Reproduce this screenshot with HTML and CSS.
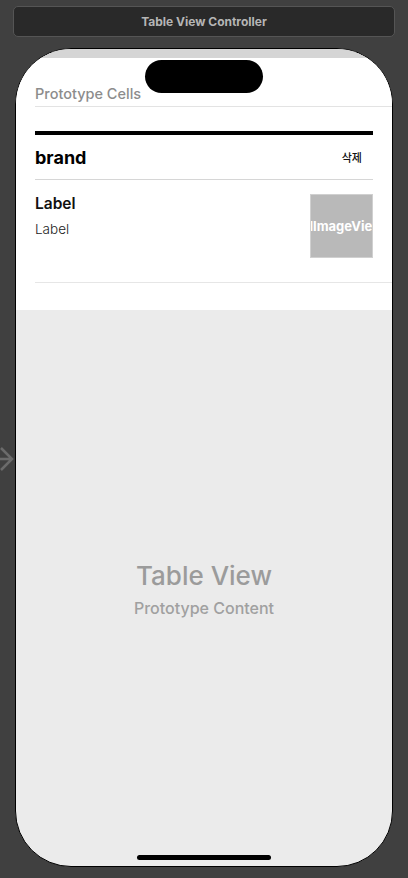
FILE: index.html
```html
<!DOCTYPE html>
<html lang="ko">
<head>
    <meta charset="UTF-8">
    <meta name="viewport" content="width=device-width, initial-scale=1.0">
    <title>Table View Controller</title>
    <link rel="stylesheet" href="styles.css">
</head>
<body>
    <div class="titlebar">Table View Controller</div>

    <svg class="entry-arrow" width="24" height="30" viewBox="0 0 24 30">
        <path d="M0 15 H21 M10 4 L21 15 L10 26" fill="none" stroke="#6b6b6b" stroke-width="2.5"/>
    </svg>

    <div class="phone">
        <div class="island"></div>
        <div class="status-strip"></div>
        <div class="cells">
            <div class="section-title">Prototype Cells</div>
            <div class="cell brand-cell">
                <div class="thick-line"></div>
                <div class="brand-row">
                    <span class="brand">brand</span>
                    <span class="delete">삭제</span>
                </div>
            </div>
            <div class="cell item-cell">
                <div class="labels">
                    <div class="label-title">Label</div>
                    <div class="label-sub">Label</div>
                </div>
                <div class="image-view"><span>UIImageView</span></div>
            </div>
        </div>
        <div class="table-body">
            <div class="tv-title">Table View</div>
            <div class="tv-sub">Prototype Content</div>
        </div>
        <div class="home-bar"></div>
    </div>
</body>
</html>
```

FILE: styles.css
```css
html, body {
    margin: 0;
    padding: 0;
}
body {
    width: 408px;
    height: 878px;
    overflow: hidden;
    background-color: #404040;
    font-family: Inter, "Noto Sans", "Noto Sans CJK KR", sans-serif;
    position: relative;
}
.titlebar {
    margin: 6px 13px 0;
    height: 29px;
    border: 1px solid #555;
    border-radius: 5px;
    background-color: #292929;
    color: #b5b5b5;
    font-size: 12px;
    font-weight: 700;
    display: flex;
    align-items: center;
    justify-content: center;
}
.entry-arrow {
    position: absolute;
    left: -9px;
    top: 444px;
}
.phone {
    position: relative;
    margin: 11px 15px 0;
    height: 817px;
    border: 1px solid #000;
    border-radius: 56px;
    overflow: hidden;
    background-color: #ebebeb;
    display: flex;
    flex-direction: column;
}
.island {
    position: absolute;
    top: 11px;
    left: 129px;
    width: 118px;
    height: 33px;
    border-radius: 17px;
    background-color: #000;
}
.status-strip {
    height: 9px;
    background-color: #d5d5d5;
}
.cells {
    background-color: #fff;
    padding-left: 19px;
    height: 252px;
}
.section-title {
    height: 49px;
    box-sizing: border-box;
    padding-top: 27px;
    font-size: 14.5px;
    font-weight: 500;
    color: #8c8c8c;
    border-bottom: 1px solid #e3e3e3;
}
.cell {
    margin-right: 19px;
}
.brand-cell {
    height: 73px;
    border-bottom: 1px solid #d6d6d6;
    padding-top: 24px;
    box-sizing: border-box;
}
.thick-line {
    height: 4px;
    background-color: #000;
}
.brand-row {
    display: flex;
    justify-content: space-between;
    align-items: center;
    height: 44px;
    padding-right: 11px;
}
.brand {
    font-size: 18px;
    font-weight: 700;
    color: #000;
}
.delete {
    font-size: 11px;
    font-weight: 500;
    color: #111;
}
.item-cell {
    margin-right: 0;
    height: 103px;
    box-sizing: border-box;
    border-bottom: 1px solid #e6e6e6;
    display: flex;
    justify-content: space-between;
    padding: 14px 19px 0 0;
}
.label-title {
    font-size: 15.5px;
    font-weight: 600;
    color: #111;
}
.label-sub {
    margin-top: 8px;
    font-size: 13.5px;
    font-weight: 300;
    color: #222;
}
.image-view {
    width: 61px;
    height: 62px;
    border: 1px solid #d0d0d0;
    background-color: #b9b9b9;
    display: flex;
    align-items: center;
    justify-content: center;
    overflow: hidden;
}
.image-view span {
    color: #fff;
    font-size: 13px;
    font-weight: 700;
    white-space: nowrap;
}
.table-body {
    flex: 1;
    display: flex;
    flex-direction: column;
    align-items: center;
    padding-top: 250px;
    color: #9b9b9b;
}
.tv-title {
    font-size: 26px;
    font-weight: 500;
}
.tv-sub {
    margin-top: 7px;
    font-size: 16px;
    font-weight: 500;
    color: #a0a0a0;
}
.home-bar {
    position: absolute;
    bottom: 6px;
    left: 121px;
    width: 134px;
    height: 5px;
    border-radius: 3px;
    background-color: #000;
}
```
